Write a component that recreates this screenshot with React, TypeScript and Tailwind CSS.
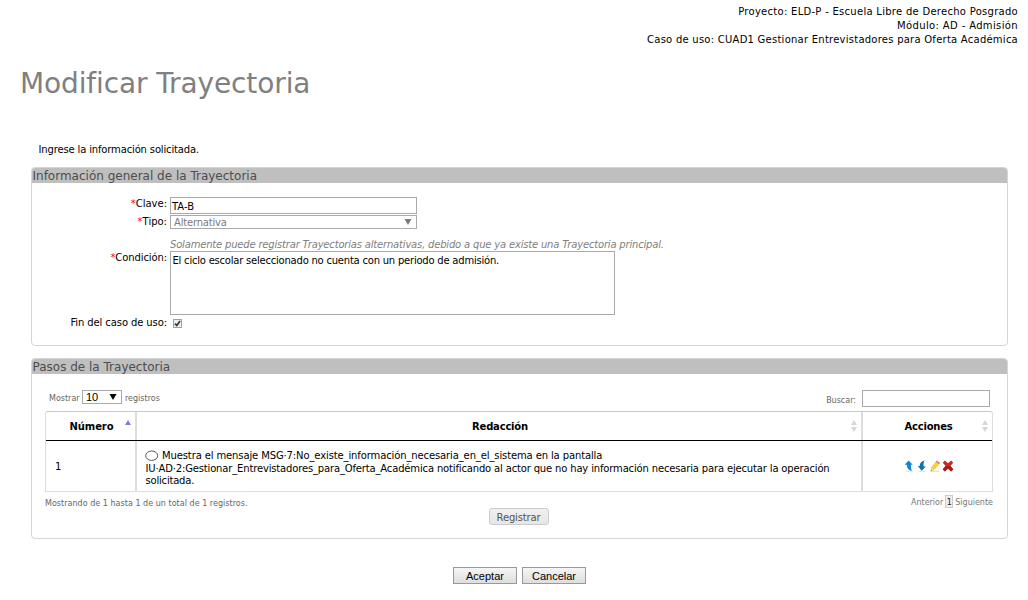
import type { ReactNode } from "react";

const Asterisk = () => <span className="text-[#f00]">*</span>;

function Panel({ title, className, children }: { title: ReactNode; className: string; children: ReactNode }) {
  return (
    <section className={`ml-[31px] w-[977px] overflow-hidden rounded-[4px] border border-[#d3d6d6] ${className}`}>
      <h2 className="h-[15px] bg-[#bfbfbf] pl-[0.5px] text-[12px] leading-[16px] whitespace-nowrap text-[#4d4d4d]">{title}</h2>
      {children}
    </section>
  );
}

function Row({ label, className, children }: { label?: ReactNode; className: string; children: ReactNode }) {
  return (
    <div className={`flex ${className}`}>
      <div className="w-[138px] shrink-0 pr-[3px] text-right leading-[13px] whitespace-nowrap">{label}</div>
      {children}
    </div>
  );
}

const Caret = () => (
  <svg width="8" height="7" viewBox="0 0 8 7" fill="currentColor">
    <path d="M0.5 0h7L4 6z" />
  </svg>
);

const SortBoth = () => (
  <svg width="6" height="12" viewBox="0 0 6 12" fill="#d6d6d6">
    <path d="M3 0l3 5H0zM0 7h6l-3 5z" />
  </svg>
);

const UpArrow = () => (
  <svg width="12" height="12" viewBox="0 0 12 12">
    <ellipse cx="6.5" cy="11.2" rx="3.5" ry=".6" fill="#ddd" />
    <path d="M5.6 0.5L9.8 4.8H7.9C7.8 7 8.1 9 8.9 10.7C6.1 10.4 4 8.6 3.8 4.8H1.6z" fill="#1287cb" />
  </svg>
);

const DownArrow = () => (
  <svg width="12" height="12" viewBox="0 0 12 12">
    <ellipse cx="6" cy="11.2" rx="3.5" ry=".6" fill="#ddd" />
    <path d="M8.5 0.5C5.2 1 3.8 3.2 3.8 6H1.9L5.6 10.8L9.9 6.5H7.7C7.3 4 7.5 2.2 8.5 0.5z" fill="#0e6fb5" />
  </svg>
);

const Pencil = () => (
  <svg width="12" height="12" viewBox="0 0 12 12">
    <path d="M1 11.2h9" stroke="#d5d5d5" />
    <path d="M2.3 7.3L6.6 1.8l3.4 2.6-4.6 5.5-3.2.9z" fill="#f8cf3c" />
    <path d="M6.6 1.8L7.8.5 11.2 3 10 4.4z" fill="#e0844f" />
    <path d="M2.3 7.4l3 2.4-3.2 1z" fill="#ead6ae" />
    <path d="M2.1 9.8l.9.7-1.3.5z" fill="#444" />
  </svg>
);

const Cross = () => (
  <svg width="12" height="12" viewBox="0 0 12 12">
    <path d="M.8 2.7L2.8.6 6 3.3 9.2.6l2 2.1L8.4 6l2.8 3.3-2 2.1L6 8.6l-3.2 2.8-2-2.1L3.6 6z" fill="#c62b25" />
    <path d="M3.6 6h4.8l2.8 3.3-2 2.1L6 8.6l-3.2 2.8-2-2.1z" fill="#a61d1c" />
  </svg>
);

export default function App() {
  return (
    <main className="h-[600px] w-[1028px] overflow-hidden bg-white font-['DejaVu_Sans',sans-serif] text-[10px] text-black">
      <header className="flex h-[47px] flex-col items-end pt-[5px] pr-[10px] leading-[14px] whitespace-nowrap">
        <div className="tracking-[0.28px]">Proyecto: ELD-P - Escuela Libre de Derecho Posgrado</div>
        <div className="tracking-[0.36px]">Módulo: AD - Admisión</div>
        <div className="tracking-[0.245px]">Caso de uso: CUAD1 Gestionar Entrevistadores para Oferta Académica</div>
      </header>
      <h1 className="mt-[17px] ml-[20px] h-[40px] text-[28px] leading-[40px] tracking-[-0.12px] whitespace-nowrap text-[#808080]">
        Modificar Trayectoria
      </h1>
      <p className="mt-[39px] ml-[38.5px] h-[24px] leading-[14px] tracking-[-0.15px] whitespace-nowrap">
        Ingrese la información solicitada.
      </p>

      <Panel title="Información general de la Trayectoria" className="h-[179px]">
        <Row label={<><Asterisk />Clave:</>} className="mt-[14px] h-[18px]">
          <div className="h-[17px] w-[247px] border border-[#a9a9a9] pl-px leading-[17px]">TA-B</div>
        </Row>
        <Row label={<><Asterisk />Tipo:</>} className="h-[23px]">
          <div className="flex h-[14px] w-[247px] items-center justify-between border border-[#a9a9a9] pr-[4px] pl-[3px] leading-[14px] text-[#7a7a7a]">
            <span className="pt-px tracking-[-0.2px]">Alternativa</span>
            <Caret />
          </div>
        </Row>
        <Row className="h-[13px]">
          <em className="leading-[13px] tracking-[-0.185px] whitespace-nowrap text-[#808080]">
            Solamente puede registrar Trayectorias alternativas, debido a que ya existe una Trayectoria principal.
          </em>
        </Row>
        <Row label={<span className="tracking-[-0.1px]"><Asterisk />Condición:</span>} className="h-[65px]">
          <div className="h-[64px] w-[445px] border border-[#a9a9a9] pt-[2px] pl-[1.5px] leading-[13px] tracking-[-0.22px] whitespace-nowrap">
            El ciclo escolar seleccionado no cuenta con un periodo de admisión.
          </div>
        </Row>
        <Row label={<span className="tracking-[-0.1px]">Fin del caso de uso:</span>} className="h-[15px]">
          <div className="mt-[3px] ml-[3px] flex size-[9px] items-center justify-center border border-[#a0a0a0] bg-[#eee]">
            <svg width="7" height="7" viewBox="0 0 7 7" fill="none" stroke="#333" strokeWidth="1.7">
              <path d="M1 3.6l1.8 1.8L6 1" />
            </svg>
          </div>
        </Row>
      </Panel>

      <Panel title="Pasos de la Trayectoria" className="mt-[12px] h-[181px]">
        <div className="mt-[16px] ml-[17px] flex h-[21px] w-[941px] justify-between text-[8px] text-[#666]">
          <div className="flex leading-[17px]">
            <span className="w-[33px] whitespace-nowrap">Mostrar</span>
            <div className="flex h-[14px] w-[40px] items-center justify-between border border-[#a9a9a9] pr-[4px] pl-[3px] font-['Liberation_Sans',sans-serif] text-[11px] leading-[14px] text-black">
              10
              <Caret />
            </div>
            <span className="ml-[3px] whitespace-nowrap">registros</span>
          </div>
          <div className="flex">
            <span className="mr-[6px] pt-[3px] leading-[16px]">Buscar:</span>
            <div className="h-[17px] w-[128px] border border-[#a9a9a9]" />
          </div>
        </div>

        <div className="ml-[13px] h-[81px] w-[948px] rounded-t-[3px] border border-[#ddd] border-t-[#c8c8c8]">
          <div className="flex h-[29px] border-b border-black leading-[29px] font-bold">
            <div className="relative w-[91px] border-r-2 border-[#ddd] pl-[2px] text-center tracking-[-0.1px]">
              Número
              <svg className="absolute top-[8px] right-[4px]" width="6" height="5" viewBox="0 0 6 5">
                <path d="M3 0l3 5H0z" fill="#7b7fdc" />
              </svg>
            </div>
            <div className="relative w-[726px] border-r-2 border-[#ddd] pl-[2px] text-center tracking-[-0.2px]">
              Redacción
              <div className="absolute top-[8px] right-[4px]"><SortBoth /></div>
            </div>
            <div className="relative w-[129px] pl-[2px] text-center tracking-[-0.2px]">
              Acciones
              <div className="absolute top-[8px] right-[4px]"><SortBoth /></div>
            </div>
          </div>
          <div className="flex h-[50px]">
            <div className="w-[91px] border-r-2 border-[#ddd] pl-[9px] leading-[51px]">1</div>
            <div className="w-[726px] border-r-2 border-[#ddd] pt-[7px] pl-[8px] leading-[13px] whitespace-nowrap">
              <div className="flex h-[14px] items-center">
                <svg className="mr-[3px]" width="14" height="11" viewBox="0 0 14 11">
                  <ellipse cx="6.7" cy="5.7" rx="6" ry="4.7" fill="white" stroke="#444" strokeWidth="0.9" />
                </svg>
                <span className="tracking-[-0.12px]">Muestra el mensaje MSG·7:No_existe_información_necesaria_en_el_sistema en la pantalla</span>
              </div>
              <div className="pl-[0.5px] tracking-[-0.158px]">
                IU·AD·2:Gestionar_Entrevistadores_para_Oferta_Académica notificando al actor que no hay información necesaria para ejecutar la operación
              </div>
              <div className="pl-[0.5px] leading-[12px] tracking-[-0.2px]">solicitada.</div>
            </div>
            <div className="flex w-[129px] items-center justify-center gap-[1px] pl-[2px]">
              <UpArrow />
              <DownArrow />
              <Pencil />
              <Cross />
            </div>
          </div>
        </div>

        <div className="ml-[13px] flex h-[16px] w-[948px] justify-between text-[8px] text-[#666]">
          <span className="pt-[5px] leading-[14px] tracking-[0.03px] whitespace-nowrap">Mostrando de 1 hasta 1 de un total de 1 registros.</span>
          <div className="flex pt-[3px] leading-[16px] text-[#777]">
            <span>Anterior</span>
            <span className="mx-[2px] h-[13px] w-[8px] border border-[#ccc] bg-[#eee] text-center leading-[13px] text-[#222]">1</span>
            <span>Siguiente</span>
          </div>
        </div>
        <div className="flex h-[17px] justify-center pr-[2px]">
          <button className="h-[17px] w-[60px] rounded-[3px] border border-[#ccc] bg-linear-to-b from-[#f0f0f0] to-[#e6e6e6] text-[10px] leading-[17px] tracking-[-0.15px] text-[#555]">
            Registrar
          </button>
        </div>
      </Panel>

      <div className="mt-[28px] ml-[453px] flex gap-[5px] font-['Liberation_Sans',sans-serif] text-[11px]">
        <button className="h-[17px] w-[64px] border border-[#999] bg-linear-to-b from-[#f6f6f6] to-[#dedede] leading-[16px]">Aceptar</button>
        <button className="h-[17px] w-[64px] border border-[#999] bg-linear-to-b from-[#f6f6f6] to-[#dedede] leading-[16px]">Cancelar</button>
      </div>
    </main>
  );
}
